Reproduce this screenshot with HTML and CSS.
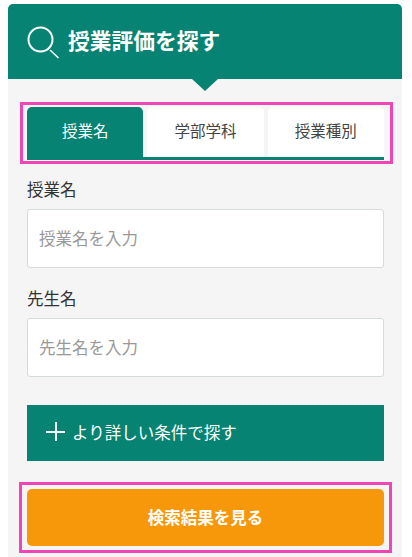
FILE: index.html
```html
<!DOCTYPE html>
<html lang="ja">
<head>
    <meta charset="UTF-8">
    <meta name="viewport" content="width=device-width, initial-scale=1.0">
    <title>授業評価を探す</title>
    <link rel="stylesheet" href="styles.css">
</head>
<body>

    <div class="card">
        <div class="card-head">
            <svg class="search-icon" width="34" height="34" viewBox="0 0 34 34" fill="none" stroke="#fff">
                <circle cx="14.5" cy="14.5" r="12" stroke-width="2"/>
                <path d="M24 25l8.5 8" stroke-width="1.6"/>
            </svg>
            <h1>授業評価を探す</h1>
        </div>

        <div class="card-body">
            <div class="mark mark-tabs">
                <div class="tabs">
                    <div class="tab active">授業名</div>
                    <div class="tab">学部学科</div>
                    <div class="tab">授業種別</div>
                </div>
            </div>

            <div class="field">
                <label for="lesson">授業名</label>
                <input type="text" id="lesson" placeholder="授業名を入力">
            </div>

            <div class="field">
                <label for="teacher">先生名</label>
                <input type="text" id="teacher" placeholder="先生名を入力">
            </div>

            <button class="more-button"><span class="plus"></span>より詳しい条件で探す</button>

            <div class="mark mark-submit">
                <button class="submit-button">検索結果を見る</button>
            </div>
        </div>
    </div>

</body>
</html>
```

FILE: styles.css
```css
body {
    margin: 0;
    background-color: #fff;
    color: #333;
    font-family: "Noto Sans CJK JP", "Noto Sans", sans-serif;
}

.card {
    margin: 4px 10px 0 8px;
    height: 553px;
    display: flex;
    flex-direction: column;
}

.card-head {
    position: relative;
    flex: none;
    height: 75px;
    display: flex;
    align-items: center;
    gap: 8px;
    padding: 0 0 0 18px;
    background-color: #068372;
    border-radius: 5px 5px 0 0;
}

.card-head::after {
    content: "";
    position: absolute;
    left: 184px;
    top: 75px;
    border-left: 13px solid transparent;
    border-right: 13px solid transparent;
    border-top: 12px solid #068372;
}

.search-icon {
    margin-top: 1px;
}

.card-head h1 {
    margin: 0 0 3px;
    color: #fff;
    font-size: 21.75px;
    font-weight: 700;
    line-height: 30px;
}

.card-body {
    flex: 1;
    background-color: #f5f5f5;
    padding-top: 23px;
}

.mark {
    border: 3px solid #f045b4;
    box-sizing: border-box;
}

.mark-tabs {
    margin: 0 9px 0 12px;
    height: 62px;
    padding: 2px 6px 0 4px;
}

.tabs {
    display: flex;
    gap: 4px;
    border-bottom: 3px solid #068372;
}

.tab {
    flex: 1;
    height: 50px;
    box-sizing: border-box;
    padding-bottom: 4px;
    display: flex;
    align-items: center;
    justify-content: center;
    background-color: #fff;
    border-radius: 5px 5px 0 0;
    font-size: 15.5px;
    color: #444;
}

.tab.active {
    background-color: #068372;
    color: #fff;
}

.field {
    margin: 14px 18px 0 19px;
}

.field + .field {
    margin-top: 19px;
}

.field label {
    display: block;
    font-size: 16.5px;
    line-height: 22px;
    margin-bottom: 9px;
}

.field input {
    display: block;
    width: 100%;
    height: 59px;
    box-sizing: border-box;
    padding: 0 11px 2px;
    border: 1px solid #d5dada;
    border-radius: 3px;
    background-color: #fff;
    font-family: inherit;
    font-size: 16.5px;
}

.field input::placeholder {
    color: #999;
}

.more-button {
    display: flex;
    align-items: center;
    gap: 7px;
    width: 357px;
    height: 56px;
    margin: 28px 0 0 19px;
    padding: 0 0 3px 19px;
    border: none;
    background-color: #068372;
    color: #fff;
    font-family: inherit;
    font-size: 16.5px;
}

.plus {
    width: 19px;
    height: 19px;
    background:
        linear-gradient(#fff, #fff) center / 19px 2px no-repeat,
        linear-gradient(#fff, #fff) center / 2px 19px no-repeat;
}

.mark-submit {
    margin: 21px 10px 0 11px;
    height: 71px;
    padding: 4px 5px;
}

.submit-button {
    display: block;
    width: 100%;
    height: 57px;
    padding: 0 0 2px;
    border: none;
    border-radius: 5px;
    background-color: #f6980a;
    color: #fff;
    font-family: inherit;
    font-size: 16.5px;
    font-weight: 700;
}
```
